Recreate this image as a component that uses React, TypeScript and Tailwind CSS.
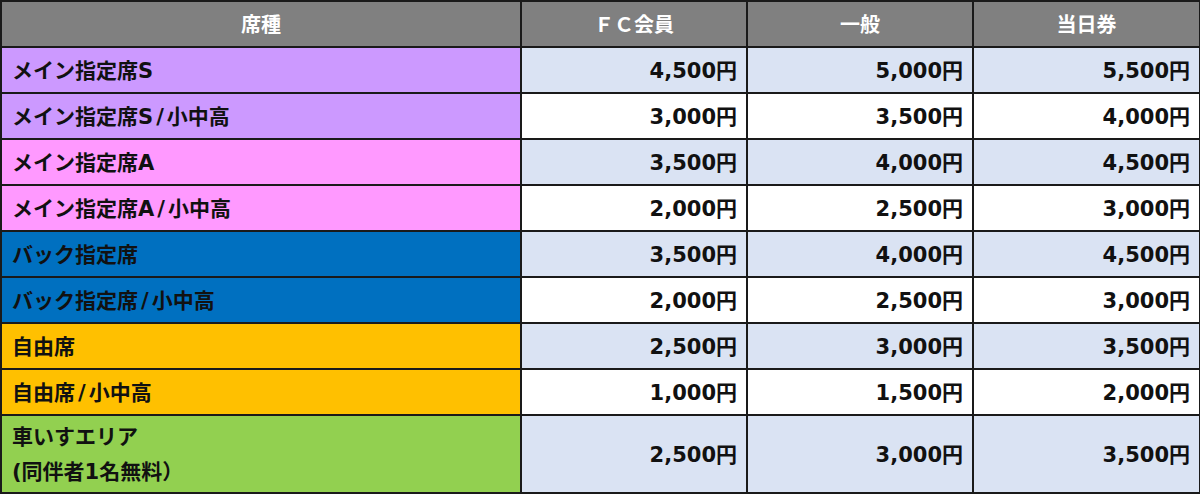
const rows = [
  { name: "メイン指定席S", bg: "bg-[#cc99ff]", fc: "4,500円", gen: "5,000円", day: "5,500円" },
  { name: "メイン指定席S/小中高", bg: "bg-[#cc99ff]", fc: "3,000円", gen: "3,500円", day: "4,000円" },
  { name: "メイン指定席A", bg: "bg-[#ff99ff]", fc: "3,500円", gen: "4,000円", day: "4,500円" },
  { name: "メイン指定席A/小中高", bg: "bg-[#ff99ff]", fc: "2,000円", gen: "2,500円", day: "3,000円" },
  { name: "バック指定席", bg: "bg-[#0070c0]", fc: "3,500円", gen: "4,000円", day: "4,500円" },
  { name: "バック指定席/小中高", bg: "bg-[#0070c0]", fc: "2,000円", gen: "2,500円", day: "3,000円" },
  { name: "自由席", bg: "bg-[#ffc000]", fc: "2,500円", gen: "3,000円", day: "3,500円" },
  { name: "自由席/小中高", bg: "bg-[#ffc000]", fc: "1,000円", gen: "1,500円", day: "2,000円" },
];

const font = { fontFamily: '"DejaVu Sans", "Noto Sans CJK JP", sans-serif' };

// slash is wider in the original font, pad it a little
function Name({ text }: { text: string }) {
  const parts = text.split("/");
  if (parts.length === 1) return <>{text}</>;
  return (
    <>
      {parts[0]}
      <span className="px-[3px]">/</span>
      {parts[1]}
    </>
  );
}

export default function App() {
  return (
    <div className="bg-white w-[1200px] h-[497px]" style={font}>
      <table className="border-collapse w-[1199px] table-fixed text-[21px] font-bold text-[#111]">
        <colgroup>
          <col className="w-[520px]" />
          <col className="w-[226px]" />
          <col className="w-[226px]" />
          <col className="w-[227px]" />
        </colgroup>
        <thead>
          <tr className="h-[46px] bg-[#808080] text-white text-[20px]">
            <th className="border-2 border-[#1a1a1a] text-center pt-[2px]">席種</th>
            <th className="border-2 border-[#1a1a1a] text-center pt-[2px]">ＦＣ会員</th>
            <th className="border-2 border-[#1a1a1a] text-center pt-[2px]">一般</th>
            <th className="border-2 border-[#1a1a1a] text-center pt-[2px]">当日券</th>
          </tr>
        </thead>
        <tbody>
          {rows.map((r, i) => {
            const cell = i % 2 === 0 ? "bg-[#dae3f3]" : "bg-white";
            return (
              <tr key={r.name} className="h-[46px]">
                <td className={`border-2 border-[#1a1a1a] pl-[10px] pt-[3px] ${r.bg}`}>
                  <Name text={r.name} />
                </td>
                <td className={`border-2 border-[#1a1a1a] text-right pr-[9px] pt-[3px] ${cell}`}>{r.fc}</td>
                <td className={`border-2 border-[#1a1a1a] text-right pr-[9px] pt-[3px] ${cell}`}>{r.gen}</td>
                <td className={`border-2 border-[#1a1a1a] text-right pr-[9px] pt-[3px] ${cell}`}>{r.day}</td>
              </tr>
            );
          })}
          <tr className="h-[78px]">
            <td className="border-2 border-[#1a1a1a] pl-[10px] pt-[2px] bg-[#92d050] leading-[35px]">
              車いすエリア
              <br />
              (同伴者1名無料）
            </td>
            <td className="border-2 border-[#1a1a1a] text-right pr-[9px] pt-[3px] bg-[#dae3f3]">2,500円</td>
            <td className="border-2 border-[#1a1a1a] text-right pr-[9px] pt-[3px] bg-[#dae3f3]">3,000円</td>
            <td className="border-2 border-[#1a1a1a] text-right pr-[9px] pt-[3px] bg-[#dae3f3]">3,500円</td>
          </tr>
        </tbody>
      </table>
    </div>
  );
}
